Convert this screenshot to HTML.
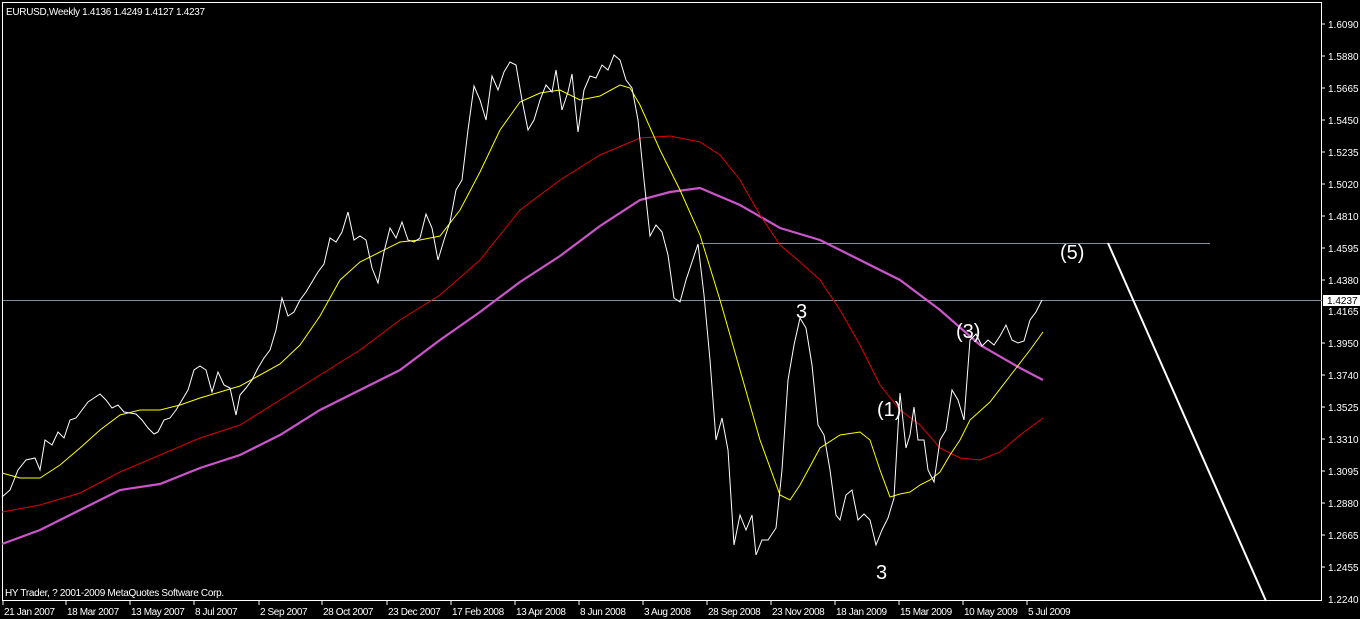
<!DOCTYPE html>
<html><head><meta charset="utf-8"><style>
html,body{margin:0;padding:0;background:#000;}
svg{display:block;font-family:"Liberation Sans",sans-serif;}
</style></head><body>
<svg width="1360" height="619" viewBox="0 0 1360 619" xmlns="http://www.w3.org/2000/svg">
<rect width="1360" height="619" fill="#000"/>
<rect x="2.5" y="2.5" width="1319" height="598" fill="none" stroke="#fff" stroke-width="1"/>
<text x="6" y="15" fill="#fff" font-size="10" letter-spacing="-0.3">EURUSD,Weekly  1.4136 1.4249 1.4127 1.4237</text>
<text x="5" y="596" fill="#fff" font-size="10" letter-spacing="-0.3">HY Trader, ? 2001-2009 MetaQuotes Software Corp.</text>
<line x1="700" y1="243.5" x2="1210" y2="243.5" stroke="#7f8fa0"/>
<line x1="3" y1="300.5" x2="1322" y2="300.5" stroke="#8090a0"/>
<polyline fill="none" stroke="#cc55cc" stroke-width="2.2" points="2,544 40,530 80,510 120,490 160,484 200,468 240,455 280,435 320,410 360,390 400,370 440,340 480,312 520,282 560,256 600,226 640,200 670,192 700,188 740,205 780,228 820,240 860,260 900,280 940,310 980,345 1020,368 1043,380"/>
<polyline fill="none" stroke="#e00000" stroke-width="1" points="2,512 40,505 80,493 120,472 160,455 200,438 240,425 280,400 320,375 360,350 400,320 440,295 480,260 520,210 560,180 600,155 640,138 670,136 700,142 720,155 740,180 760,215 780,245 800,262 820,280 840,310 860,345 880,385 900,410 920,425 940,448 960,458 980,460 1000,452 1020,435 1043,418"/>
<polyline fill="none" stroke="#ffff00" stroke-width="1" points="2,473 20,478 40,478 60,465 80,448 100,430 120,415 140,410 160,410 180,405 200,398 220,392 240,386 260,375 280,364 300,345 320,316 340,280 360,262 380,252 400,242 420,240 440,236 460,210 480,172 500,130 520,102 540,93 560,90 580,100 600,96 620,85 630,88 640,105 660,150 680,190 700,235 720,300 740,370 760,440 780,495 790,500 800,485 820,448 840,435 860,432 870,440 880,470 890,497 900,494 910,492 920,485 930,480 940,472 950,455 960,440 970,420 990,402 1010,376 1030,350 1043,332"/>
<polyline fill="none" stroke="#fff" stroke-width="1" points="2,497 10,490 18,470 26,460 35,458 40,470 45,440 52,445 58,432 64,438 70,420 76,418 82,410 88,402 94,398 100,394 106,400 112,408 118,405 124,412 130,413 136,414 142,420 148,428 154,434 158,432 164,420 170,418 176,410 182,400 188,390 194,370 200,366 206,370 212,392 218,372 224,385 230,388 236,415 240,395 246,388 252,380 258,368 264,358 270,350 276,330 282,298 288,316 294,312 300,300 306,292 312,282 318,272 324,264 330,238 336,242 342,232 348,212 354,240 360,236 366,240 372,268 378,283 384,252 390,228 396,238 402,222 408,240 414,242 420,238 426,214 432,228 438,260 444,240 450,222 456,190 462,180 468,130 474,86 480,100 486,120 492,76 498,90 504,72 510,62 516,65 522,100 528,130 534,120 540,100 546,85 552,92 556,70 562,110 568,92 572,74 578,132 584,90 590,76 596,78 602,65 608,70 614,55 620,60 626,80 632,88 638,120 644,180 650,236 656,225 662,232 668,255 674,298 680,302 686,280 692,262 698,244 704,295 710,360 716,440 722,418 728,450 734,545 740,515 746,530 752,515 756,555 762,540 768,540 776,528 782,470 788,380 794,345 800,318 806,328 812,365 818,425 824,435 830,470 836,515 840,520 846,495 852,490 858,520 864,514 870,520 876,545 882,530 888,518 894,498 900,393 906,448 910,435 914,407 918,440 924,440 928,470 934,482 940,440 946,430 952,390 958,400 964,420 970,340 976,334 982,346 988,340 994,345 1000,336 1006,325 1012,340 1018,343 1024,341 1030,320 1036,312 1042,300"/>
<line x1="1108" y1="243" x2="1266" y2="601" stroke="#fff" stroke-width="2"/>
<g fill="#fff" font-size="20">
<text x="796" y="318">3</text>
<text x="876" y="579">3</text>
<text x="877" y="416">(1)</text>
<text x="956" y="338">(3)</text>
<text x="1060" y="259">(5)</text>
</g>
<g fill="#fff" font-size="10" stroke="none">
<text x="1328" y="28">1.6090</text><text x="1328" y="60">1.5880</text><text x="1328" y="92">1.5665</text><text x="1328" y="124">1.5450</text><text x="1328" y="156">1.5235</text><text x="1328" y="188">1.5020</text><text x="1328" y="220">1.4810</text><text x="1328" y="252">1.4595</text><text x="1328" y="284">1.4380</text><text x="1328" y="315">1.4165</text><text x="1328" y="347">1.3950</text><text x="1328" y="379">1.3740</text><text x="1328" y="411">1.3525</text><text x="1328" y="443">1.3310</text><text x="1328" y="475">1.3095</text><text x="1328" y="507">1.2880</text><text x="1328" y="539">1.2665</text><text x="1328" y="571">1.2455</text><text x="1328" y="603">1.2240</text>
</g>
<g stroke="#fff"><line x1="1322" y1="24" x2="1325" y2="24"/><line x1="1322" y1="56" x2="1325" y2="56"/><line x1="1322" y1="88" x2="1325" y2="88"/><line x1="1322" y1="120" x2="1325" y2="120"/><line x1="1322" y1="152" x2="1325" y2="152"/><line x1="1322" y1="184" x2="1325" y2="184"/><line x1="1322" y1="216" x2="1325" y2="216"/><line x1="1322" y1="248" x2="1325" y2="248"/><line x1="1322" y1="280" x2="1325" y2="280"/><line x1="1322" y1="343" x2="1325" y2="343"/><line x1="1322" y1="375" x2="1325" y2="375"/><line x1="1322" y1="407" x2="1325" y2="407"/><line x1="1322" y1="439" x2="1325" y2="439"/><line x1="1322" y1="471" x2="1325" y2="471"/><line x1="1322" y1="503" x2="1325" y2="503"/><line x1="1322" y1="535" x2="1325" y2="535"/><line x1="1322" y1="567" x2="1325" y2="567"/></g>
<rect x="1323" y="295" width="37" height="11" fill="#fff"/>
<text x="1327" y="304" fill="#000" font-size="10">1.4237</text>
<g stroke="#fff"><line x1="3" y1="601" x2="3" y2="605"/><line x1="66" y1="601" x2="66" y2="605"/><line x1="130" y1="601" x2="130" y2="605"/><line x1="194" y1="601" x2="194" y2="605"/><line x1="259" y1="601" x2="259" y2="605"/><line x1="322" y1="601" x2="322" y2="605"/><line x1="387" y1="601" x2="387" y2="605"/><line x1="451" y1="601" x2="451" y2="605"/><line x1="515" y1="601" x2="515" y2="605"/><line x1="579" y1="601" x2="579" y2="605"/><line x1="643" y1="601" x2="643" y2="605"/><line x1="707" y1="601" x2="707" y2="605"/><line x1="771" y1="601" x2="771" y2="605"/><line x1="835" y1="601" x2="835" y2="605"/><line x1="899" y1="601" x2="899" y2="605"/><line x1="963" y1="601" x2="963" y2="605"/><line x1="1027" y1="601" x2="1027" y2="605"/></g>
<g fill="#fff" font-size="10" letter-spacing="-0.4">
<text x="4" y="615">21 Jan 2007</text><text x="67" y="615">18 Mar 2007</text><text x="131" y="615">13 May 2007</text><text x="195" y="615">8 Jul 2007</text><text x="260" y="615">2 Sep 2007</text><text x="323" y="615">28 Oct 2007</text><text x="388" y="615">23 Dec 2007</text><text x="452" y="615">17 Feb 2008</text><text x="516" y="615">13 Apr 2008</text><text x="580" y="615">8 Jun 2008</text><text x="644" y="615">3 Aug 2008</text><text x="708" y="615">28 Sep 2008</text><text x="772" y="615">23 Nov 2008</text><text x="836" y="615">18 Jan 2009</text><text x="900" y="615">15 Mar 2009</text><text x="964" y="615">10 May 2009</text><text x="1028" y="615">5 Jul 2009</text>
</g>
</svg>
</body></html>
